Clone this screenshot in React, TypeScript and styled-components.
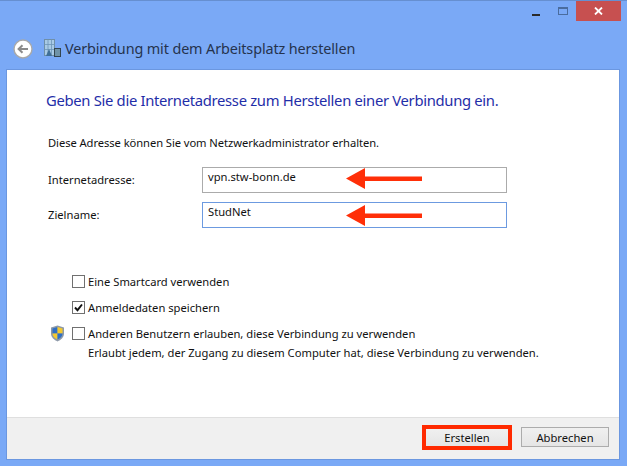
import React from 'react';
import styled, { createGlobalStyle } from 'styled-components';

const Global = createGlobalStyle`
  html, body {
    margin: 0;
    padding: 0;
    background: #7aa9f6;
    overflow: hidden;
  }
  * {
    box-sizing: border-box;
  }
`;

const Frame = styled.div`
  width: 627px;
  height: 466px;
  display: flex;
  flex-direction: column;
  background: #7aa9f6;
  border-top: 1px solid #668fd0;
  font-family: 'Noto Sans', 'Open Sans', sans-serif;
  font-size: 12px;
  color: #111;
`;

const Caption = styled.div`
  height: 20px;
  display: flex;
  justify-content: flex-end;
  padding-right: 6px;
`;

const CaptionButton = styled.div<{ $w: number; $bg?: string }>`
  width: ${p => p.$w}px;
  height: 20px;
  display: flex;
  align-items: center;
  justify-content: center;
  background: ${p => p.$bg || 'transparent'};
`;

const MinGlyph = styled.div`
  width: 8px;
  height: 2px;
  margin: 7px 2px 0 0;
  background: #2a2a2a;
`;

const MaxGlyph = styled.div`
  width: 10px;
  height: 8px;
  border: 1px solid #4a6c9e;
  border-top-width: 2px;
`;

const HeaderRow = styled.div`
  height: 48px;
  display: flex;
  align-items: center;
  gap: 11px;
  padding: 8px 0 0 13px;
`;

const TitleGroup = styled.div`
  display: flex;
  align-items: center;
  gap: 4px;
  margin-bottom: 2px;
`;

const Title = styled.div`
  font-size: 14.4px;
  letter-spacing: -0.12px;
  color: #25334d;
  white-space: nowrap;
`;

const Body = styled.div`
  flex: 1;
  margin: 0 7px 6px 6px;
  display: flex;
  flex-direction: column;
  background: #fff;
  border: 1px solid #6b97e0;
`;

const Content = styled.div`
  flex: 1;
  padding: 18px 0 0 40px;
`;

const Heading = styled.div`
  margin-left: -1px;
  font-size: 14.8px;
  letter-spacing: -0.31px;
  line-height: 24px;
  color: #1f2ea8;
  white-space: nowrap;
`;

const Hint = styled.div`
  margin: 23px 0 0 1px;
  font-size: 11.2px;
  letter-spacing: -0.07px;
  line-height: 16px;
  white-space: nowrap;
`;

const Fields = styled.div`
  margin: 16px 0 0 1px;
  display: flex;
  flex-direction: column;
  gap: 9px;
`;

const FieldRow = styled.div`
  display: flex;
  align-items: center;
`;

const FieldLabel = styled.div`
  width: 154px;
  margin-bottom: 2px;
  font-size: 11.2px;
`;

const Field = styled.div<{ $focus?: boolean }>`
  position: relative;
  width: 305px;
  height: 26px;
  padding: 0 0 8px 5px;
  display: flex;
  align-items: center;
  font-size: 11.2px;
  border: 1px solid ${p => (p.$focus ? '#6c9ae0' : '#ababab')};
`;

const ArrowMark = styled.svg<{ $top: number }>`
  position: absolute;
  left: 143px;
  top: ${p => p.$top}px;
`;

const Options = styled.div`
  margin: 40px 0 0 25px;
  display: flex;
  flex-direction: column;
`;

const OptionRow = styled.div`
  height: 26px;
  display: flex;
  align-items: center;
  gap: 3px;
  font-size: 11.2px;
  white-space: nowrap;
`;

const Box = styled.div`
  width: 13px;
  height: 13px;
  display: flex;
  border: 1px solid #707070;
  background: #fff;
`;

const ShieldSlot = styled.div`
  position: absolute;
  left: -22px;
  top: 5px;
  display: flex;
`;

const UacRow = styled.div`
  position: relative;
  display: flex;
  flex-direction: column;
`;

const Note = styled.div`
  margin: -2px 0 0 16px;
  font-size: 11.2px;
  line-height: 17px;
  white-space: nowrap;
`;

const Footer = styled.div`
  height: 42px;
  display: flex;
  align-items: center;
  justify-content: flex-end;
  gap: 9px;
  padding: 0 10px 3px 0;
  background: #f0f0f0;
  border-top: 1px solid #dfdfdf;
`;

const Button = styled.button<{ $mark?: boolean }>`
  width: ${p => (p.$mark ? '90px' : '88px')};
  height: ${p => (p.$mark ? '25px' : '20px')};
  padding: 0;
  font-family: inherit;
  font-size: 11.2px;
  color: #111;
  background: linear-gradient(#f0f0f0, #e5e5e5);
  border: ${p => (p.$mark ? '4px solid #ff2a00' : '1px solid #acacac')};
`;

const BackIcon = () => (
  <svg width="20" height="20" viewBox="0 0 20 20">
    <circle cx="10" cy="10" r="9" fill="#fff" stroke="#a9a9a9" strokeWidth="1.4" />
    <path d="M15 10H6M9.5 6.2 5.6 10l3.9 3.8" fill="none" stroke="#8a8a8a" strokeWidth="2" />
  </svg>
);

const NetworkIcon = () => (
  <svg width="17" height="18" viewBox="0 0 17 18">
    <rect x="0.5" y="0.5" width="10" height="16" fill="#a9cbe6" stroke="#6f8fa8" />
    <path d="M0.5 5.5h10M0.5 10.5h10M4 0.5v16M7.5 0.5v16" stroke="#6f96b8" strokeWidth="0.8" />
    <path d="M2 17l3-7 3 7z" fill="#3f6f97" />
    <rect x="10.5" y="9.5" width="6" height="8" fill="#6f93a8" stroke="#33454f" />
  </svg>
);

const ShieldIcon = () => (
  <svg width="15" height="17" viewBox="0 0 15 17">
    <path d="M7.5 0.5 14 2.5v6c0 4-3.2 6.400-6.500 8C4.200 14.900 1 12.500 1 8.500v-6z" fill="#8d99a8" />
    <path d="M7.500 2 7.500 8.500H2.500V3.500z" fill="#2f6fc4" />
    <path d="M7.500 2 12.500 3.500V8.500H7.500z" fill="#f4c92e" />
    <path d="M2.500 8.500H7.500V14.500C5 13.300 2.500 11.500 2.500 8.500z" fill="#f4c92e" />
    <path d="M7.500 8.500H12.500C12.500 11.500 10 13.300 7.500 14.500z" fill="#2f6fc4" />
  </svg>
);

const CloseGlyph = () => (
  <svg width="9" height="8" viewBox="0 0 9 8">
    <path d="M1 .5 8 7.500M8 .5 1 7.500" stroke="#fff" strokeWidth="1.800" />
  </svg>
);

const Check = () => (
  <svg width="11" height="11" viewBox="0 0 11 11">
    <path d="M2 5.500 4.500 8.200 9 2.500" fill="none" stroke="#111" strokeWidth="1.900" />
  </svg>
);

const Arrow = ({ top }: { top: number }) => (
  <ArrowMark $top={top} width="77" height="21" viewBox="0 0 77 21">
    <path d="M0 10.500 19 0V8.500H76V13H19V21z" fill="#ff2f08" />
  </ArrowMark>
);

export default function App() {
  return (
    <>
      <Global />
      <Frame>
        <Caption>
          <CaptionButton $w={26}>
            <MinGlyph />
          </CaptionButton>
          <CaptionButton $w={26}>
            <MaxGlyph />
          </CaptionButton>
          <CaptionButton $w={45} $bg="#c75050">
            <CloseGlyph />
          </CaptionButton>
        </Caption>
        <HeaderRow>
          <BackIcon />
          <TitleGroup>
            <NetworkIcon />
            <Title>Verbindung mit dem Arbeitsplatz herstellen</Title>
          </TitleGroup>
        </HeaderRow>
        <Body>
          <Content>
            <Heading>Geben Sie die Internetadresse zum Herstellen einer Verbindung ein.</Heading>
            <Hint>Diese Adresse können Sie vom Netzwerkadministrator erhalten.</Hint>
            <Fields>
              <FieldRow>
                <FieldLabel>Internetadresse:</FieldLabel>
                <Field>
                  vpn.stw-bonn.de
                  <Arrow top={0} />
                </Field>
              </FieldRow>
              <FieldRow>
                <FieldLabel>Zielname:</FieldLabel>
                <Field $focus>
                  StudNet
                  <Arrow top={2} />
                </Field>
              </FieldRow>
            </Fields>
            <Options>
              <OptionRow>
                <Box />
                Eine Smartcard verwenden
              </OptionRow>
              <OptionRow>
                <Box>
                  <Check />
                </Box>
                Anmeldedaten speichern
              </OptionRow>
              <UacRow>
                <ShieldSlot>
                  <ShieldIcon />
                </ShieldSlot>
                <OptionRow>
                  <Box />
                  Anderen Benutzern erlauben, diese Verbindung zu verwenden
                </OptionRow>
                <Note>Erlaubt jedem, der Zugang zu diesem Computer hat, diese Verbindung zu verwenden.</Note>
              </UacRow>
            </Options>
          </Content>
          <Footer>
            <Button $mark>Erstellen</Button>
            <Button>Abbrechen</Button>
          </Footer>
        </Body>
      </Frame>
    </>
  );
}
